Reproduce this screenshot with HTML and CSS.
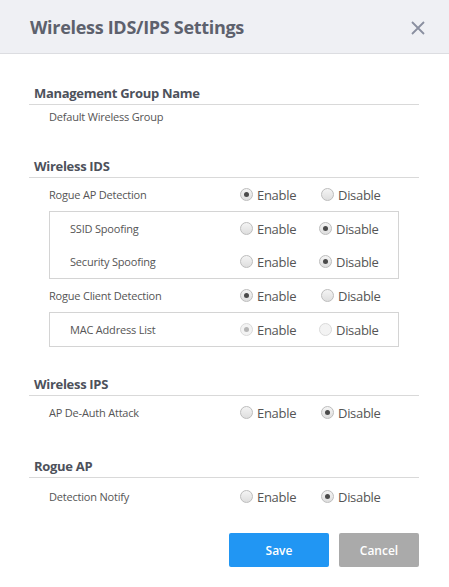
FILE: index.html
```html
<!DOCTYPE html>
<html lang="en">
<head>
	<meta charset="UTF-8">
	<title>Wireless IDS/IPS Settings</title>
	<link rel="stylesheet" href="styles.css">
</head>
<body>
	<div class="dialog">
		<div class="dialog-head">
			<span class="dialog-title">Wireless IDS/IPS Settings</span>
			<span class="dialog-close">
				<svg width="14" height="14" viewBox="0 0 14 14"><path d="M1 1 L13 13 M13 1 L1 13" stroke="#8a8fa0" stroke-width="1.8" fill="none"/></svg>
			</span>
		</div>

		<div class="dialog-body">
			<div class="group">
				<div class="group-title">Management Group Name</div>
				<div class="plain-row">Default Wireless Group</div>
			</div>

			<div class="group">
				<div class="group-title">Wireless IDS</div>
				<div class="row">
					<span class="row-label">Rogue AP Detection</span>
					<label class="opt"><span class="radio checked"></span>Enable</label>
					<label class="opt"><span class="radio"></span>Disable</label>
				</div>
				<div class="sub-box">
					<div class="row">
						<span class="row-label">SSID Spoofing</span>
						<label class="opt"><span class="radio"></span>Enable</label>
						<label class="opt"><span class="radio checked"></span>Disable</label>
					</div>
					<div class="row">
						<span class="row-label">Security Spoofing</span>
						<label class="opt"><span class="radio"></span>Enable</label>
						<label class="opt"><span class="radio checked"></span>Disable</label>
					</div>
				</div>
				<div class="row">
					<span class="row-label">Rogue Client Detection</span>
					<label class="opt"><span class="radio checked"></span>Enable</label>
					<label class="opt"><span class="radio"></span>Disable</label>
				</div>
				<div class="sub-box">
					<div class="row">
						<span class="row-label">MAC Address List</span>
						<label class="opt"><span class="radio checked disabled"></span>Enable</label>
						<label class="opt"><span class="radio disabled"></span>Disable</label>
					</div>
				</div>
			</div>

			<div class="group">
				<div class="group-title">Wireless IPS</div>
				<div class="row">
					<span class="row-label">AP De-Auth Attack</span>
					<label class="opt"><span class="radio"></span>Enable</label>
					<label class="opt"><span class="radio checked"></span>Disable</label>
				</div>
			</div>

			<div class="group">
				<div class="group-title">Rogue AP</div>
				<div class="row row-last">
					<span class="row-label">Detection Notify</span>
					<label class="opt"><span class="radio"></span>Enable</label>
					<label class="opt"><span class="radio checked"></span>Disable</label>
				</div>
			</div>

			<div class="actions">
				<button class="btn btn-save">Save</button>
				<button class="btn btn-cancel">Cancel</button>
			</div>
		</div>
	</div>
</body>
</html>
```

FILE: styles.css
```css
body {
	margin: 0;
	background: #ffffff;
	font-family: "Open Sans", "Noto Sans", sans-serif;
	color: #555;
}

.dialog {
	width: 449px;
	height: 587px;
	background: #fff;
}

.dialog-head {
	height: 54px;
	background: #eff0f4;
	border-bottom: 1px solid #dcdde1;
	display: flex;
	align-items: center;
	justify-content: space-between;
	padding: 0 24px 0 30px;
	box-sizing: border-box;
}

.dialog-title {
	font-size: 18px;
	font-weight: bold;
	letter-spacing: -0.3px;
	color: #5d616d;
	margin-top: 1px;
}

.dialog-close {
	display: flex;
	margin-top: 2px;
}

.dialog-body {
	padding: 28px 30px 0 29px;
}

.group {
	margin-bottom: 26px;
}

.group-title {
	font-size: 13px;
	font-weight: bold;
	letter-spacing: -0.3px;
	color: #4d515b;
	line-height: 22px;
	padding-left: 5px;
	border-bottom: 1px solid #d9d9d9;
}

.plain-row {
	font-size: 11px;
	letter-spacing: -0.2px;
	line-height: 24px;
	padding-left: 20px;
	color: #555;
}

.row {
	display: flex;
	align-items: center;
	height: 33px;
	padding-left: 20px;
}

.row-last {
	margin-top: 2px;
}

.row-label {
	width: 191px;
	flex: none;
	font-size: 11px;
	letter-spacing: -0.2px;
	color: #555;
}

.sub-box {
	margin-left: 20px;
	width: 350px;
	border: 1px solid #d4d4d4;
	box-sizing: border-box;
}

.sub-box .row-label {
	width: 170px;
}

.opt {
	width: 81px;
	display: flex;
	align-items: center;
	font-size: 13px;
	letter-spacing: -0.3px;
	color: #555;
}

.radio {
	width: 11px;
	height: 11px;
	border-radius: 50%;
	border: 1px solid #bdbdbd;
	background: linear-gradient(#f4f4f4, #dedede);
	margin-right: 4px;
	position: relative;
	flex: none;
}

.radio.checked::after {
	content: "";
	position: absolute;
	left: 3px;
	top: 3px;
	width: 5px;
	height: 5px;
	border-radius: 50%;
	background: #4a4a4a;
}

.radio.disabled {
	border-color: #dadada;
	background: #f3f3f3;
}

.radio.disabled.checked::after {
	background: #b5b5b5;
}

.actions {
	display: flex;
	justify-content: flex-end;
	gap: 10px;
	margin-top: -6px;
}

.btn {
	height: 34px;
	border: none;
	border-radius: 2px;
	color: #fff;
	font-family: "Open Sans", "Noto Sans", sans-serif;
	font-size: 12px;
	font-weight: 600;
}

.btn-save {
	width: 100px;
	background: #2196f3;
}

.btn-cancel {
	width: 80px;
	background: #aaaaaa;
}
```
